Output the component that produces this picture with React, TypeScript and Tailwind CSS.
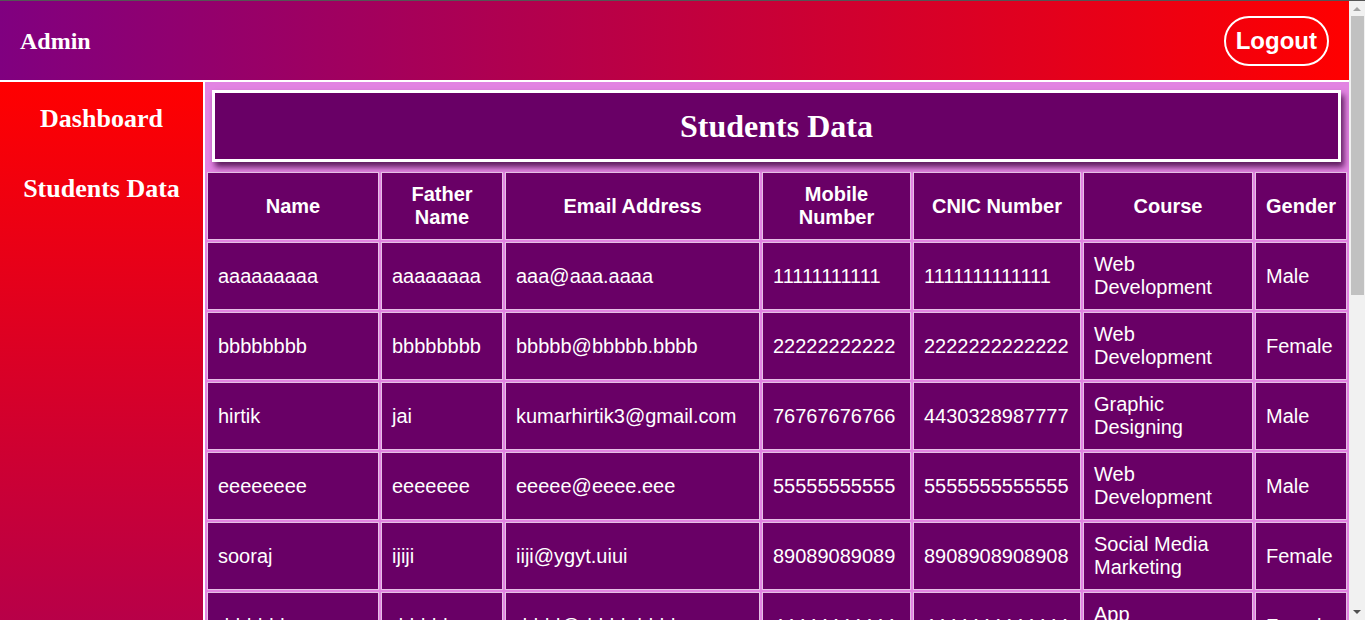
const students = [
  ["aaaaaaaaa", "aaaaaaaa", "aaa@aaa.aaaa", "11111111111", "1111111111111", "Web Development", "Male"],
  ["bbbbbbbb", "bbbbbbbb", "bbbbb@bbbbb.bbbb", "22222222222", "2222222222222", "Web Development", "Female"],
  ["hirtik", "jai", "kumarhirtik3@gmail.com", "76767676766", "4430328987777", "Graphic Designing", "Male"],
  ["eeeeeeee", "eeeeeee", "eeeee@eeee.eee", "55555555555", "5555555555555", "Web Development", "Male"],
  ["sooraj", "ijiji", "iiji@ygyt.uiui", "89089089089", "8908908908908", "Social Media Marketing", "Female"],
  ["dddddd", "ddddd", "dddd@dddd.dddd", "44444444444", "4444444444444", "App Development", "Female"],
];

const headers = [
  { label: "Name", w: "w-[172px]" },
  { label: "Father Name", w: "w-[122px]" },
  { label: "Email Address", w: "w-[255px]" },
  { label: "Mobile Number", w: "w-[149px]" },
  { label: "CNIC Number", w: "w-[168px]" },
  { label: "Course", w: "w-[170px]" },
  { label: "Gender", w: "w-[92px]" },
];

const serif = "font-['Liberation_Serif','Times_New_Roman',serif]";
const sans = "font-['Liberation_Sans',Arial,sans-serif]";

export default function App() {
  return (
    <div className="h-screen flex overflow-hidden border-t border-[#555]">
      {/* Сторінка */}
      <div className="flex-1 min-w-0 flex flex-col overflow-hidden">
        {/* Шапка */}
        <header className="h-[81px] shrink-0 border-b-2 border-white bg-[linear-gradient(to_right,#800080,#ff0000)] flex items-center justify-between pl-5 pr-[20px]">
          <span className={`${serif} text-[24px] font-bold text-white`}>Admin</span>
          <button
            type="button"
            className={`${sans} text-[24px] leading-[28px] font-bold text-white border-2 border-white rounded-full px-[10px] py-[9px]`}
          >
            Logout
          </button>
        </header>

        <div className="flex flex-1 min-h-0">
          {/* Бокова панель */}
          <aside className="w-[205px] shrink-0 border-r-2 border-white bg-[linear-gradient(180deg,#ff0000_0px,#b80048_538px,#800080_1100px)] pt-[22px]">
            <nav className={`${serif} text-[26px] font-bold text-white flex flex-col items-center gap-[40px]`}>
              <a className="leading-[30px]">Dashboard</a>
              <a className="leading-[30px]">Students Data</a>
            </nav>
          </aside>

          {/* Контент */}
          <main className="flex-1 min-w-0 bg-[#e284e2]">
            <div className="ml-[7px] mr-[8px] mt-[8px] mb-[8px] h-[72px] border-[3px] border-white bg-[#690066] shadow-[3px_5px_6px_rgba(60,0,60,0.8)] flex items-center justify-center">
              <h1 className={`${serif} text-[32px] font-bold text-white`}>Students Data</h1>
            </div>

            <table className={`${sans} w-full table-fixed border-separate border-spacing-[2px] text-white text-[20px] leading-[23px]`}>
              <thead>
                <tr>
                  {headers.map((h) => (
                    <th
                      key={h.label}
                      className={`${h.w} h-[68px] bg-[#690066] border border-[#e6c0e6] px-[10px] font-bold text-center align-middle`}
                    >
                      {h.label}
                    </th>
                  ))}
                </tr>
              </thead>
              <tbody>
                {students.map((row, i) => (
                  <tr key={i}>
                    {row.map((cell, j) => (
                      <td
                        key={j}
                        className="h-[68px] bg-[#690066] border border-[#e6c0e6] px-[10px] align-middle text-left"
                      >
                        {cell}
                      </td>
                    ))}
                  </tr>
                ))}
              </tbody>
            </table>
          </main>
        </div>
      </div>

      {/* Смуга прокрутки */}
      <div className="w-[16px] shrink-0 bg-[#f1f1f1] flex flex-col items-center">
        <div className="h-[15px] w-full flex items-center justify-center">
          <svg width="8" height="5" viewBox="0 0 8 5">
            <path d="M0 5 L4 1 L8 5 Z" fill="#a3a3a3" />
          </svg>
        </div>
        <div className="ml-[1px] w-[13px] h-[279px] bg-[#c1c1c1]" />
        <div className="flex-1" />
        <div className="h-[15px] w-full flex items-center justify-center">
          <svg width="8" height="5" viewBox="0 0 8 5">
            <path d="M0 0 L8 0 L4 4 Z" fill="#505050" />
          </svg>
        </div>
      </div>
    </div>
  );
}
